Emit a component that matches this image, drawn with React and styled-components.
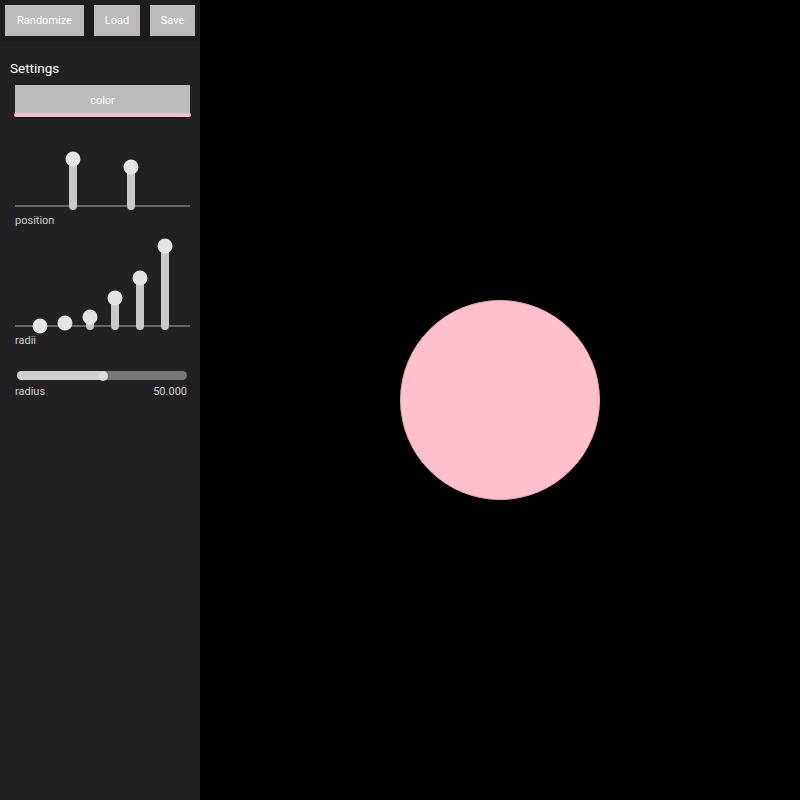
import React from "react";
import styled, { createGlobalStyle } from "styled-components";

const Global = createGlobalStyle`
  html, body { margin: 0; padding: 0; background: #000; }
  body { font-family: Roboto, "Liberation Sans", sans-serif; }
`;

const Page = styled.div`
  display: flex;
  width: 800px;
  height: 800px;
`;

const Panel = styled.div`
  width: 200px;
  background: #212121;
  display: flex;
  flex-direction: column;
`;

const TopBar = styled.div`
  height: 42px;
  background: #1c1c1c;
  display: flex;
  gap: 10px;
  padding: 5px 0 0 5px;
  box-sizing: border-box;
  align-items: flex-start;
`;

const Button = styled.button`
  height: 31px;
  width: ${(p) => p.w}px;
  border: none;
  background: #bbbbbb;
  color: #fff;
  font-family: Roboto, "Liberation Sans", sans-serif;
  font-size: 11px;
  padding: 0;
`;

const Title = styled.div`
  color: #fff;
  font-size: 13.5px;
  padding: 18px 0 0 10px;
  line-height: 17px;
`;

const Content = styled.div`
  padding: 8px 10px 0 15px;
  display: flex;
  flex-direction: column;
`;

const ColorButton = styled.div`
  position: relative;
  width: 175px;
  height: 28px;
  box-sizing: border-box;
  padding-top: 3px;
  background: #bbbbbb;
  color: #fff;
  font-size: 11px;
  display: flex;
  align-items: center;
  justify-content: center;
  margin-bottom: 31px;
`;

const ColorBar = styled.div`
  position: absolute;
  left: -1px;
  right: -1px;
  bottom: -4px;
  height: 4px;
  border-radius: 2px;
  background: #ffc0cb;
  box-shadow: 0 1px 1px rgba(0, 0, 0, 0.35);
`;

const Graph = styled.svg`
  display: block;
  width: 175px;
`;

const Label = styled.div`
  display: flex;
  justify-content: space-between;
  color: #d0d0d0;
  font-size: 11px;
  line-height: 14px;
  width: 172px;
  margin-top: ${(p) => p.mt || 0}px;
  margin-bottom: ${(p) => p.mb || 0}px;
`;

const Track = styled.div`
  position: relative;
  margin-left: 2px;
  width: 170px;
  height: 9px;
  border-radius: 4.5px;
  background: #777;
`;

const Fill = styled.div`
  height: 100%;
  border-radius: 4.5px;
  background: #cfcfcf;
`;

const Thumb = styled.div`
  position: absolute;
  top: -0.5px;
  width: 10px;
  height: 10px;
  margin-left: -5px;
  border-radius: 50%;
  background: #dcdcdc;
`;

const Canvas = styled.div`
  flex: 1;
  background: #000;
  display: flex;
  align-items: center;
  justify-content: center;
`;

const Circle = styled.div`
  width: 200px;
  height: 200px;
  border-radius: 50%;
  background: #ffc0cb;
  box-sizing: border-box;
  border: 1px solid #e8aeb8;
`;

function Stems({ height, base, points }) {
  return (
    <Graph height={height} viewBox={`0 0 175 ${height}`}>
      <line x1="0" y1={base} x2="175" y2={base} stroke="#666" strokeWidth="2" />
      {points.map(([x, y], i) => (
        <g key={i}>
          <line x1={x} y1={y} x2={x} y2={base} stroke="#c8c8c8" strokeWidth="8" strokeLinecap="round" />
          <circle cx={x} cy={y} r="7.5" fill="#e4e4e4" />
        </g>
      ))}
    </Graph>
  );
}

export default function App() {
  const value = 50;
  const pct = 86 / 170;
  return (
    <Page>
      <Global />
      <Panel>
        <TopBar>
          <Button w={79}>Randomize</Button>
          <Button w={46}>Load</Button>
          <Button w={45}>Save</Button>
        </TopBar>
        <Title>Settings</Title>
        <Content>
          <ColorButton>
            color
            <ColorBar />
          </ColorButton>
          <Stems height={71} base={62} points={[[58, 15], [116, 23]]} />
          <Label mt={-1} mb={10}>position</Label>
          <Stems height={98} base={88} points={[[25, 88], [50, 85], [75, 79], [100, 60], [125, 40], [150, 8]]} />
          <Label mt={-2} mb={23}>radii</Label>
          <Track>
            <Fill style={{ width: `${pct * 100}%` }} />
            <Thumb style={{ left: `${pct * 100}%` }} />
          </Track>
          <Label mt={5}>
            <span>radius</span>
            <span>{value.toFixed(3)}</span>
          </Label>
        </Content>
      </Panel>
      <Canvas>
        <Circle />
      </Canvas>
    </Page>
  );
}
